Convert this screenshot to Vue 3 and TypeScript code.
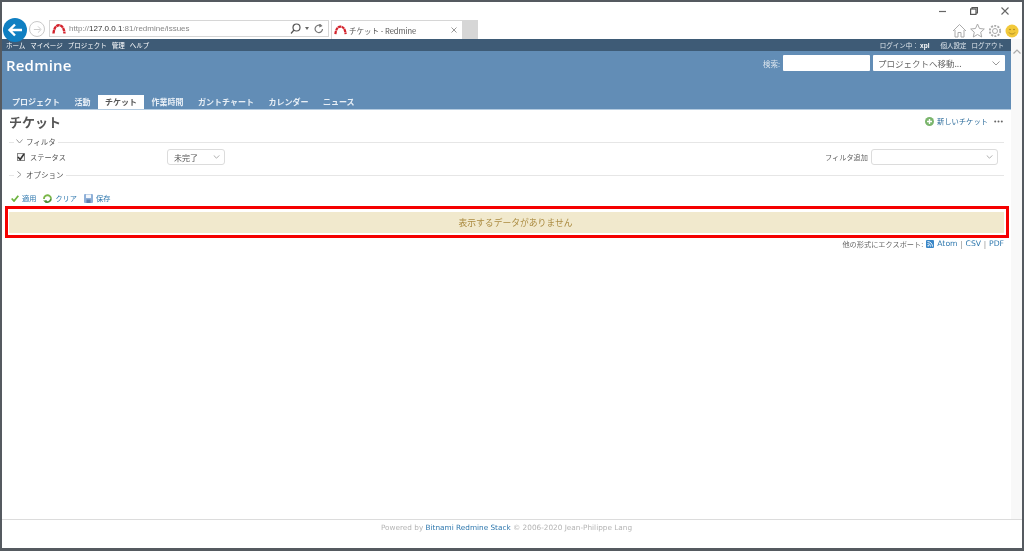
<template>
  <div class="window">
    <!-- browser chrome -->
    <div class="chrome">
      <div class="win-row">
        <svg class="win-icon" width="8" height="8" viewBox="0 0 8 8"><path d="M0 4.500H7" stroke="#666" stroke-width="1.200" /></svg>
        <svg class="win-icon" width="8" height="8" viewBox="0 0 8 8" fill="none" stroke="#555" stroke-width="1.200"><path d="M2 2V.6H7.400V6H6" /><rect x=".6" y="2" width="5.400" height="5.400" /></svg>
        <svg class="win-icon" width="8" height="8" viewBox="0 0 8 8"><path d="M.5.500L7.500 7.500M7.500.500L.5 7.500" stroke="#666" stroke-width="1.100" /></svg>
      </div>
      <div class="nav-row">
        <div class="back">
          <svg width="16" height="14" viewBox="0 0 16 14" fill="none" stroke="#fff" stroke-width="2.400"><path d="M15 7H3M8 1.500L2.500 7L8 12.500" /></svg>
        </div>
        <div class="forward">
          <svg width="9" height="9" viewBox="0 0 10 10" fill="none" stroke="#c6c6c6" stroke-width="1"><path d="M1 5H8M5.500 1.500L9 5L5.500 8.500" /></svg>
        </div>
        <div class="address">
          <svg width="14" height="10" viewBox="0 0 14 10" fill="none"><path d="M1.500 9.500C2 4 4 1.300 7 1.300S12 4 12.500 9.500" stroke="#d3222c" stroke-width="2.400" stroke-dasharray="3.500 .5" /></svg>
          <span class="url">http://<b>127.0.0.1</b>:81/redmine/issues</span>
          <svg class="search-glass" width="11" height="11" viewBox="0 0 11 11" fill="none" stroke="#555" stroke-width="1.200"><circle cx="6.500" cy="4.500" r="3.500" /><path d="M4 7L1 10.500" /></svg>
          <span class="drop-tri"></span>
          <svg width="10" height="10" viewBox="0 0 10 10" fill="none" stroke="#777" stroke-width="1.200"><path d="M8.500 5A3.700 3.700 0 1 1 6.500 1.600M5.500 0L7.500 1.800L5.200 3" /></svg>
        </div>
        <div class="browser-tab">
          <svg width="13" height="10" viewBox="0 0 14 10" fill="none"><path d="M1.500 9.500C2 4 4 1.300 7 1.300S12 4 12.500 9.500" stroke="#d3222c" stroke-width="2.400" stroke-dasharray="3.500 .5" /></svg>
          <span class="tab-title">チケット - Redmine</span>
          <svg width="6" height="6" viewBox="0 0 6 6"><path d="M.5.500L5.500 5.500M5.500.500L.5 5.500" stroke="#999" stroke-width="1" /></svg>
        </div>
        <div class="new-tab"></div>
        <div class="tools">
          <svg width="15" height="15" viewBox="0 0 15 15" fill="none" stroke="#aaa"><path d="M1 8L7.500 1.500L14 8M3 7V14H6V9.500H9V14H12V7" /></svg>
          <svg width="15" height="15" viewBox="0 0 15 15" fill="none" stroke="#aaa"><path d="M7.500 1L9.500 5.500L14.300 6L10.700 9.200L11.700 14L7.500 11.500L3.300 14L4.300 9.200L.7 6L5.500 5.500Z" /></svg>
          <svg width="14" height="14" viewBox="0 0 14 14" fill="none" stroke="#aaa"><circle cx="7" cy="7" r="2.500" /><circle cx="7" cy="7" r="5.200" stroke-width="1.800" stroke-dasharray="2 1.300" /></svg>
          <svg width="14" height="14" viewBox="0 0 14 14"><circle cx="7" cy="7" r="6.500" fill="#f2c93a" /><circle cx="5" cy="5.500" r=".8" fill="#a07f20" /><circle cx="9" cy="5.500" r=".8" fill="#a07f20" /><path d="M4 8.500C5 10.500 9 10.500 10 8.500" fill="none" stroke="#a07f20" stroke-width=".8" /></svg>
        </div>
      </div>
    </div>

    <div class="viewport">
      <div class="page">
        <div class="top-menu">
          <div class="top-links">
            <a v-for="item in topLinks" :key="item">{{ item }}</a>
          </div>
          <div class="top-links account">
            <span>ログイン中： <b>xpl</b></span>
            <a>個人設定</a>
            <a>ログアウト</a>
          </div>
        </div>

        <div class="header">
          <div class="header-main">
            <h1>Redmine</h1>
            <div class="quick">
              <span>検索:</span>
              <input class="q" type="text" />
              <div class="jump">
                <span>プロジェクトへ移動...</span>
                <svg class="chev" width="8" height="5" viewBox="0 0 8 5" fill="none" stroke="#999"><path d="M.5.500L4 4L7.500.500" /></svg>
              </div>
            </div>
          </div>
          <ul class="tabs">
            <li v-for="tab in tabs" :key="tab" :class="{ selected: tab === 'チケット' }">{{ tab }}</li>
          </ul>
        </div>

        <div class="content">
          <div class="title-row">
            <h2>チケット</h2>
            <div class="contextual">
              <svg width="9" height="9" viewBox="0 0 9 9"><circle cx="4.500" cy="4.500" r="4.500" fill="#7ab56c" /><path d="M4.500 2V7M2 4.500H7" stroke="#fff" stroke-width="1.400" /></svg>
              <a>新しいチケット</a>
              <svg class="dots" width="9" height="3" viewBox="0 0 9 3" fill="#666"><circle cx="1.200" cy="1.500" r="1" /><circle cx="4.500" cy="1.500" r="1" /><circle cx="7.800" cy="1.500" r="1" /></svg>
            </div>
          </div>

          <div class="fieldset filters">
            <div class="legend">
              <span class="arrow"><svg width="7" height="5" viewBox="0 0 7 5" fill="none" stroke="#999"><path d="M.5.500L3.500 4L6.500.500" /></svg></span>
              <span>フィルタ</span>
            </div>
            <div class="filter-row">
              <label class="status-label">
                <span class="check">
                  <svg width="8" height="8" viewBox="0 0 8 8" fill="none" stroke="#333" stroke-width="1.600"><path d="M1 4L3.200 6.500L7 1" /></svg>
                </span>
                ステータス
              </label>
              <div class="select status-select">
                <span>未完了</span>
                <svg class="chev" width="7" height="4" viewBox="0 0 8 5" fill="none" stroke="#999"><path d="M.5.500L4 4L7.500.500" /></svg>
              </div>
              <span class="add-label">フィルタ追加</span>
              <div class="select add-select">
                <svg class="chev" width="7" height="4" viewBox="0 0 8 5" fill="none" stroke="#999"><path d="M.5.500L4 4L7.500.500" /></svg>
              </div>
            </div>
          </div>

          <div class="fieldset options">
            <div class="legend">
              <span class="arrow"><svg width="5" height="7" viewBox="0 0 5 7" fill="none" stroke="#999"><path d="M.5.500L4 3.500L.5 6.500" /></svg></span>
              <span>オプション</span>
            </div>
          </div>

          <div class="buttons">
            <a>
              <svg width="8" height="7" viewBox="0 0 8 7" fill="none" stroke="#6db33f" stroke-width="1.800"><path d="M.7 3.500L3 6L7.300 .7" /></svg>
              適用
            </a>
            <a>
              <svg width="9" height="9" viewBox="0 0 9 9" fill="none"><path d="M1 5A3.500 3.500 0 0 1 8 4.500" stroke="#7ab648" stroke-width="1.800" /><path d="M8 4.500A3.500 3.500 0 0 1 2 7" stroke="#4f8f3a" stroke-width="1.800" /><path d="M0 6.500H4V9.500Z" fill="#4f8f3a" /></svg>
              クリア
            </a>
            <a>
              <svg width="9" height="9" viewBox="0 0 9 9"><rect width="9" height="9" rx="1" fill="#8fb0d8" /><rect x="2" y=".5" width="5" height="3.500" fill="#f4f7fb" /><rect x="2.500" y="5.500" width="4" height="3.500" fill="#5d7fae" /></svg>
              保存
            </a>
          </div>

          <div class="highlight">
            <p class="nodata">表示するデータがありません</p>
          </div>

          <p class="other-formats">
            <span>他の形式にエクスポート:</span>
            <svg width="8" height="8" viewBox="0 0 8 8"><rect width="8" height="8" rx="1" fill="#3a87c8" /><circle cx="2.200" cy="5.800" r=".8" fill="#fff" /><path d="M1.500 3.500A3 3 0 0 1 4.500 6.500M1.500 1.500A5 5 0 0 1 6.500 6.500" fill="none" stroke="#fff" stroke-width=".9" /></svg>
            <a>Atom</a>
            <i>|</i>
            <a>CSV</a>
            <i>|</i>
            <a>PDF</a>
          </p>
        </div>

        <div class="footer">
          Powered by <a>Bitnami Redmine Stack</a> © 2006-2020 Jean-Philippe Lang
        </div>
      </div>

      <div class="scrollbar">
        <svg width="8" height="5" viewBox="0 0 8 5" fill="none" stroke="#aaa" stroke-width="1.200"><path d="M.5 4.500L4 1L7.500 4.500" /></svg>
      </div>
    </div>
  </div>
</template>

<script setup lang="ts">
const topLinks: string[] = ['ホーム', 'マイページ', 'プロジェクト', '管理', 'ヘルプ']
const tabs: string[] = ['プロジェクト', '活動', 'チケット', '作業時間', 'ガントチャート', 'カレンダー', 'ニュース']
</script>

<style>
html, body {
  margin: 0;
  background: #fff;
}
</style>

<style scoped>
/* the reference is a scaled-down screenshot, hence the slight softening */
.window {
  box-sizing: border-box;
  width: 1024px;
  height: 551px;
  display: flex;
  flex-direction: column;
  border-top: 2px solid #555a60;
  border-left: 2px solid #555a60;
  border-right: 2px solid #555a60;
  border-bottom: 3px solid #555a60;
  background: #fff;
  overflow: hidden;
  font-family: "Noto Sans CJK JP", "Noto Sans", sans-serif;
  color: #484848;
  filter: blur(.35px);
}

/* ---- browser chrome ---- */
.chrome {
  height: 37px;
  flex: none;
  position: relative;
}
.win-row {
  height: 18px;
  display: flex;
  align-items: center;
  justify-content: flex-end;
  gap: 23px;
  padding-right: 13px;
}
.win-icon {
  display: block;
}
.nav-row {
  height: 19px;
  display: flex;
  align-items: flex-end;
}
.back {
  width: 24px;
  height: 24px;
  margin: 0 0 -3px 1px;
  border-radius: 50%;
  background: #0f7fc2;
  display: flex;
  align-items: center;
  justify-content: center;
  flex: none;
  position: relative;
}
.forward {
  box-sizing: border-box;
  width: 16px;
  height: 16px;
  margin: 0 4px 2px 2px;
  border: 1px solid #c9c9c9;
  border-radius: 50%;
  display: flex;
  align-items: center;
  justify-content: center;
  flex: none;
}
.address {
  box-sizing: border-box;
  width: 280px;
  height: 17px;
  margin-bottom: 2px;
  flex: none;
  border: 1px solid #d6d6d6;
  display: flex;
  align-items: center;
  gap: 3px;
  padding: 0 4px 0 2px;
  font-size: 8px;
  color: #888;
}
.url {
  flex: 1;
  font-family: "Liberation Sans", sans-serif;
}
.url b {
  font-weight: 400;
  color: #333;
}
.drop-tri {
  width: 0;
  height: 0;
  border-left: 2.500px solid transparent;
  border-right: 2.500px solid transparent;
  border-top: 3px solid #666;
  margin: 0 2px 0 1px;
}
.browser-tab {
  box-sizing: border-box;
  width: 132px;
  height: 19px;
  margin-left: 2px;
  flex: none;
  border: 1px solid #d6d6d6;
  border-bottom: none;
  display: flex;
  align-items: center;
  gap: 2px;
  padding: 0 5px 0 2px;
}
.tab-title {
  flex: 1;
  font-size: 7.500px;
  color: #555;
}
.new-tab {
  width: 15px;
  height: 19px;
  background: #d6d6d6;
  flex: none;
}
.tools {
  margin-left: auto;
  display: flex;
  align-items: center;
  gap: 3px;
  padding: 0 3px 1px 0;
}

/* ---- page ---- */
.viewport {
  flex: 1;
  min-height: 0;
  display: flex;
}
.page {
  flex: 1;
  min-width: 0;
  display: flex;
  flex-direction: column;
}
.scrollbar {
  width: 11px;
  flex: none;
  background: #f8f8f8;
  display: flex;
  justify-content: center;
  padding-top: 10px;
  box-sizing: border-box;
}
.scrollbar svg {
  display: block;
}
.top-menu {
  height: 12px;
  flex: none;
  background: #3e5b76;
  color: #fff;
  font-size: 6.500px;
  display: flex;
  align-items: center;
  justify-content: space-between;
  padding: 0 7px 0 4px;
}
.top-links {
  display: flex;
  gap: 5px;
  white-space: nowrap;
}
.account {
  color: #dfe6ec;
}
.account span {
  margin-right: 6px;
}
.account b {
  color: #fff;
  font-family: "Liberation Sans", sans-serif;
}
.header {
  height: 59px;
  flex: none;
  box-sizing: border-box;
  background: #628db6;
  border-bottom: 1px solid #b4cbe0;
  display: flex;
  flex-direction: column;
  color: #fff;
}
.header-main {
  flex: 1;
  display: flex;
  justify-content: space-between;
  align-items: flex-start;
  padding: 4px 6px 0 4px;
}
h1 {
  margin: 0;
  font: 600 15px/20px "Open Sans", sans-serif;
  letter-spacing: .2px;
}
.quick {
  display: flex;
  align-items: center;
  gap: 3px;
  font-size: 7.500px;
  color: #dbe5ee;
}
.q {
  box-sizing: border-box;
  width: 87px;
  height: 16px;
  margin: 0;
  padding: 0;
  border: none;
  border-radius: 1px;
  background: #fff;
}
.jump {
  box-sizing: border-box;
  width: 132px;
  height: 16px;
  display: flex;
  align-items: center;
  justify-content: space-between;
  padding: 0 5px 0 5px;
  background: #fff;
  border-radius: 1px;
  color: #666;
  font-size: 8.500px;
}
.tabs {
  list-style: none;
  margin: 0;
  padding: 0 0 0 3px;
  height: 14px;
  display: flex;
  gap: .5px;
}
.tabs li {
  height: 14px;
  padding: 0 7px;
  font-size: 8px;
  font-weight: 700;
  line-height: 14px;
  color: #e8eff6;
  white-space: nowrap;
}
.tabs li.selected {
  background: #fff;
  color: #555;
}
.content {
  flex: 1;
  min-height: 0;
  display: flex;
  flex-direction: column;
  padding: 0 7px 0 3px;
}
.title-row {
  height: 22px;
  flex: none;
  display: flex;
  align-items: center;
  justify-content: space-between;
  padding: 0 1px 0 4px;
}
h2 {
  margin: 0;
  font-size: 13px;
  font-weight: 700;
  color: #555;
}
.contextual {
  display: flex;
  align-items: center;
  gap: 3px;
  font-size: 7.300px;
  color: #2a6a9a;
}
.dots {
  margin-left: 3px;
}
.fieldset {
  border-top: 1px solid #e6e6e6;
  margin-left: 4px;
  flex: none;
  position: relative;
}
.filters {
  margin-top: 10px;
  height: 33px;
  box-sizing: border-box;
}
.options {
  height: 16px;
  box-sizing: border-box;
}
.legend {
  position: absolute;
  top: -7px;
  left: 5px;
  display: flex;
  align-items: center;
  gap: 3px;
  padding: 0 2px;
  background: #fff;
  font-size: 7.500px;
  line-height: 11px;
  color: #555;
}
.arrow {
  width: 7px;
  display: flex;
  justify-content: center;
}
.filter-row {
  position: absolute;
  top: 6px;
  left: 0;
  right: 0;
  display: flex;
  align-items: center;
  height: 16px;
  font-size: 7.200px;
  padding-left: 8px;
}
.status-label {
  width: 150px;
  display: flex;
  align-items: center;
  gap: 5px;
  color: #555;
}
.check {
  box-sizing: border-box;
  width: 8px;
  height: 8px;
  border: 1px solid #888;
  background: #f4f4f4;
  display: flex;
  align-items: center;
  justify-content: center;
}
.check svg {
  flex: none;
}
.select {
  box-sizing: border-box;
  height: 16px;
  display: flex;
  align-items: center;
  justify-content: space-between;
  border: 1px solid #dcdcdc;
  border-radius: 3px;
  padding: 0 4px 0 6px;
  color: #555;
  background: #fff;
}
.status-select {
  width: 58px;
  font-size: 8px;
}
.add-label {
  margin-left: auto;
  margin-right: 3px;
  color: #666;
}
.add-select {
  width: 127px;
  justify-content: flex-end;
  margin-right: 6px;
}
.buttons {
  height: 14px;
  flex: none;
  display: flex;
  align-items: center;
  gap: 7px;
  padding-left: 6px;
  font-size: 7.200px;
  color: #2f78ae;
}
.buttons a {
  display: flex;
  align-items: center;
  gap: 3px;
}
.highlight {
  box-sizing: border-box;
  flex: none;
  height: 32px;
  width: 1004px;
  margin: 1px 0 0 0;
  border: 3px solid #f50000;
  padding: 3px 2px 2px 1px;
}
.nodata {
  margin: 0;
  height: 100%;
  box-sizing: border-box;
  padding-left: 18px;
  background: #f1e9cd;
  color: #ab8b40;
  font-size: 8.800px;
  display: flex;
  align-items: center;
  justify-content: center;
}
.other-formats {
  margin: 1px 0 0;
  flex: none;
  display: flex;
  justify-content: flex-end;
  align-items: center;
  gap: 3px;
  font-size: 7.200px;
  line-height: 10px;
  color: #666;
}
.other-formats a {
  color: #2f78ae;
  font-family: "DejaVu Sans", sans-serif;
  font-size: 7.700px;
}
.other-formats i {
  font-style: normal;
}
.footer {
  height: 29px;
  flex: none;
  box-sizing: border-box;
  border-top: 1px solid #dcdcdc;
  margin-right: -11px;
  padding: 3px 11px 0 0;
  text-align: center;
  font: 7.300px/10px "DejaVu Sans", sans-serif;
  color: #b4b4b4;
  background: #fff;
  position: relative;
}
.footer a {
  color: #2f78ae;
}
</style>
